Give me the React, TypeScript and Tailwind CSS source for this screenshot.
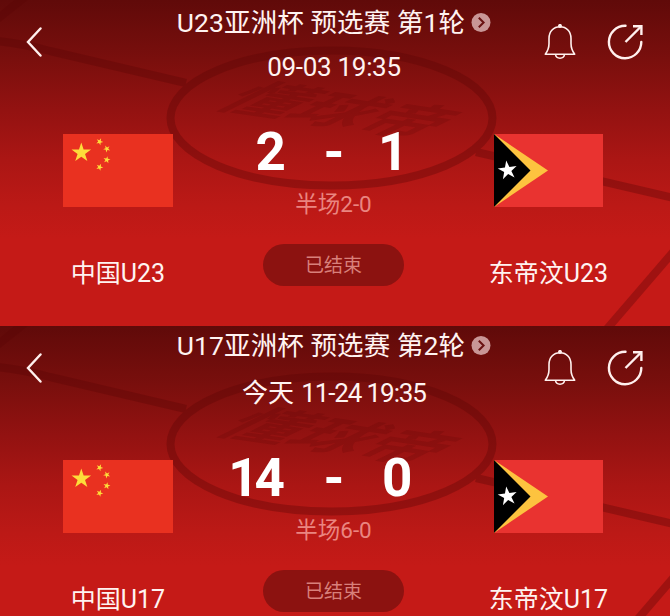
import React from 'react';
import { clsx } from 'clsx';

interface Match {
  id: string;
  title: string;
  day?: string;
  time: string;
  home: string;
  away: string;
  homeScore: number;
  awayScore: number;
  half: string;
  status: string;
}

const matches: Match[] = [
  {
    id: 'u23',
    title: 'U23亚洲杯 预选赛 第1轮',
    time: '09-03 19:35',
    home: '中国U23',
    away: '东帝汶U23',
    homeScore: 2,
    awayScore: 1,
    half: '半场2-0',
    status: '已结束',
  },
  {
    id: 'u17',
    title: 'U17亚洲杯 预选赛 第2轮',
    day: '今天',
    time: '11-24 19:35',
    home: '中国U17',
    away: '东帝汶U17',
    homeScore: 14,
    awayScore: 0,
    half: '半场6-0',
    status: '已结束',
  },
];

const STAR = '0,-1 0.225,-0.309 0.951,-0.309 0.363,0.118 0.588,0.809 0,0.382 -0.588,0.809 -0.363,0.118 -0.951,-0.309 -0.225,-0.309';

const PitchLines: React.FC = () => (
  <svg className="absolute inset-0 h-[326px] w-[670px]" viewBox="0 0 670 326" fill="none" aria-hidden="true">
    <g className="opacity-35" stroke="#5a0505" strokeWidth="8">
      <path d="M-4 20 26 -4" />
      <path d="M-4 41 Q20 43 50 51 L186 83" />
      <ellipse cx="331.5" cy="118" rx="161" ry="67.5" />
      <path d="M476 152 674 198" />
      <path d="M606 330 674 251" />
    </g>
    <text
      transform="matrix(1.16 .17 -1.1 .54 266 80)"
      y="50"
      className="font-['Noto_Sans_CJK_SC',sans-serif] text-[60px] font-bold"
      fill="#5a0505"
      fillOpacity="0.2"
    >
      懂球帝
    </text>
  </svg>
);

const ChinaFlag: React.FC = () => (
  <svg className="h-[73px] w-[110px]" viewBox="0 0 110 73" aria-hidden="true">
    <rect width="110" height="73" fill="#e93120" />
    <g fill="#fddc3a">
      <polygon points={STAR} transform="translate(18.3 18.7) scale(10.3)" />
      <polygon points={STAR} transform="translate(36.6 7.7) rotate(24) scale(3.7)" />
      <polygon points={STAR} transform="translate(43.8 14.8) rotate(46) scale(3.7)" />
      <polygon points={STAR} transform="translate(43.8 25.8) rotate(10) scale(3.7)" />
      <polygon points={STAR} transform="translate(36.6 33.2) rotate(24) scale(3.7)" />
    </g>
  </svg>
);

const TimorFlag: React.FC = () => (
  <svg className="h-[73px] w-[109px]" viewBox="0 0 109 73" aria-hidden="true">
    <rect width="109" height="73" fill="#e93330" />
    <path d="M0 0 54 36.5 0 73Z" fill="#fdc33f" />
    <path d="M0 0 36.5 36.5 0 73Z" fill="#000" />
    <polygon points={STAR} fill="#fff" transform="translate(13.6 36.3) rotate(-8) scale(10)" />
  </svg>
);

const BellIcon: React.FC = () => (
  <svg className="h-9 w-8" viewBox="0 0 32 36" fill="none" stroke="#fff0ee" strokeWidth="1.6" strokeLinejoin="round">
    <path d="M1.3 30.2 C4.2 26.5 5 23.5 5 19.5 V14.5 C5 7.5 9.5 2.8 16 2.8 S27 7.5 27 14.5 V19.5 C27 23.5 27.8 26.5 30.7 30.2Z" />
    <path d="M11.5 30.5 C12.2 35.4 19.8 35.4 20.5 30.5" />
    <circle cx="16" cy="1.9" r="1.2" fill="#fff0ee" />
  </svg>
);

const ShareIcon: React.FC = () => (
  <svg className="h-9 w-9" viewBox="0 0 36 36" fill="none" stroke="#fff0ee" strokeWidth="2.4">
    <path d="M18.5 1.8 A16.2 16.2 0 1 0 34.3 18" strokeLinecap="round" />
    <path d="M18.5 18 34 2.5" />
    <path d="M26 2.2 H34.4 V11" />
  </svg>
);

const Team: React.FC<{ name: string; children: React.ReactNode; className?: string }> = ({ name, children, className }) => (
  <div className={clsx('flex flex-col items-center', className)}>
    {children}
    <span className="mt-[49px] text-[25px] leading-9 whitespace-nowrap">{name}</span>
  </div>
);

const MatchPanel: React.FC<{ match: Match }> = ({ match }) => (
  <section
    className={clsx(
      'relative h-[326px] shrink-0 overflow-hidden text-[#fff3f1]',
      'bg-[linear-gradient(180deg,#600a09_0px,#7a0f0d_60px,#931211_110px,#ab1614_160px,#bb1916_205px,#c51a17_240px,#c51a17_326px)]',
    )}
  >
    <PitchLines />
    <div className="relative flex h-[134px] justify-between">
      <button className="flex w-[124px] items-start pt-[26px] pl-[26px]" aria-label="返回">
        <svg className="h-8 w-4" viewBox="0 0 16 32" fill="none" stroke="#fff0ee" strokeWidth="2.4" strokeLinecap="round">
          <path d="M14.5 2.5 2 16 14.5 29.5" />
        </svg>
      </button>
      <div className={clsx('flex flex-col items-center', match.day ? 'pt-[2px]' : 'pt-[5px]')}>
        <div className="flex h-9 items-center gap-[6px] text-[26.5px] tracking-[0.1px] whitespace-nowrap">
          {match.title}
          <svg className="size-5" viewBox="0 0 20 20" fill="none">
            <circle cx="10" cy="9.5" r="9.5" fill="#c99696" />
            <path d="M7.8 4.7 12.6 9.5 7.8 14.3" stroke="#6a1212" strokeWidth="2" />
          </svg>
        </div>
        <div className={clsx('flex h-9 text-[26px] leading-9 whitespace-nowrap', match.day ? 'mt-[11px] gap-[7px]' : 'mt-2')}>
          {match.day && <span>{match.day}</span>}
          <span className={match.day ? 'tracking-[-1.1px]' : 'tracking-[-0.3px]'}>{match.time}</span>
        </div>
      </div>
      <div className="flex w-[126px] items-start gap-[31px] pt-[24px] pr-6">
        <BellIcon />
        <ShareIcon />
      </div>
    </div>

    <div className="relative flex pr-[67px] pl-[63px]">
      <Team name={match.home} className="w-[110px]">
        <ChinaFlag />
      </Team>
      <div className="flex flex-1 flex-col items-center">
        <div className="-mt-[1px] flex h-[38px] w-full items-center text-[53px] leading-none font-bold text-white">
          <span className={clsx('w-[113px] text-right', match.homeScore > 9 && 'pr-[5px] tracking-[-4px]')}>
            {match.homeScore}
          </span>
          <span className="w-[96px] text-center">-</span>
          <span className={clsx(match.awayScore === 1 && '-ml-[4px]')}>{match.awayScore}</span>
        </div>
        <span className="mt-[15px] text-[22.5px] leading-9 text-[#ea8580]">{match.half}</span>
        <span className="mt-[22px] flex h-[42px] w-[141px] items-center justify-center rounded-full bg-[#8c1210] pt-[3px] text-[19px] text-[#d8807b]">
          {match.status}
        </span>
      </div>
      <Team name={match.away} className="w-[109px]">
        <TimorFlag />
      </Team>
    </div>
  </section>
);

export default function App() {
  return (
    <main className="flex h-[616px] w-[670px] flex-col overflow-hidden bg-[#c51a17] font-['Roboto','Noto_Sans_CJK_SC',sans-serif]">
      {matches.map((match) => (
        <MatchPanel key={match.id} match={match} />
      ))}
    </main>
  );
}
